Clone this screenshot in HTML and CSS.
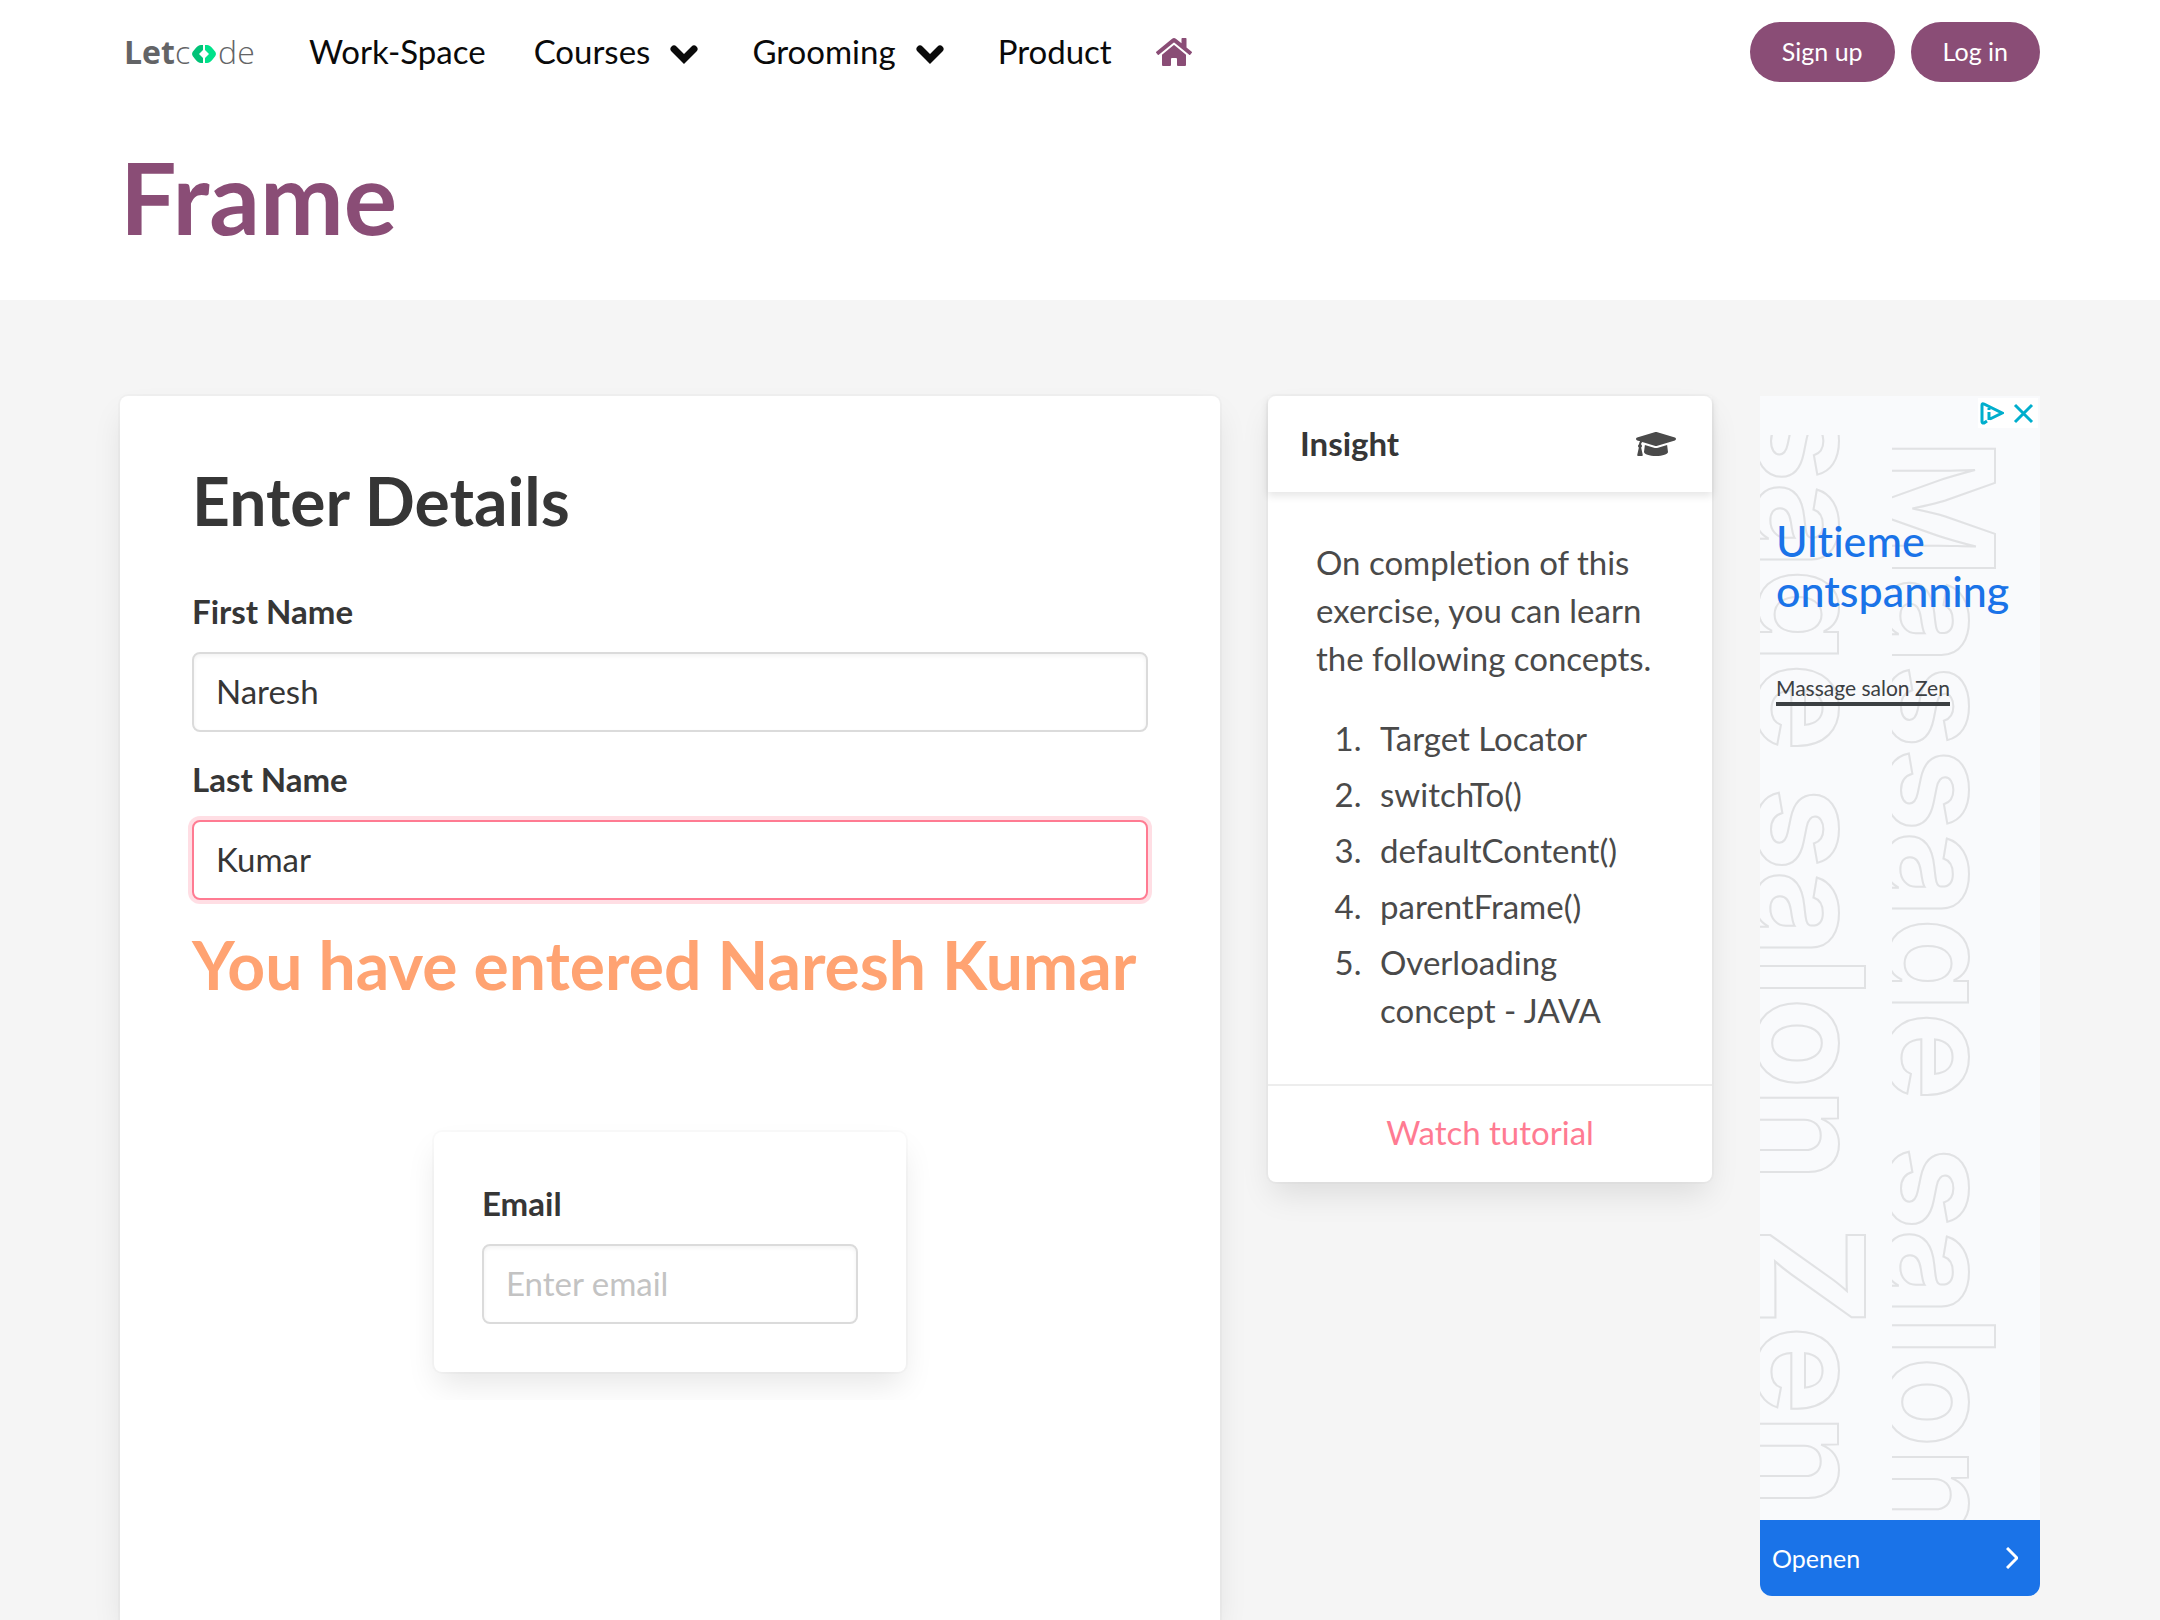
FILE: index.html
```html
<!DOCTYPE html>
<html lang="en">
<head>
<meta charset="utf-8">
<title>Frame - LetCode</title>
<meta name="viewport" content="width=device-width, initial-scale=1">
<link rel="stylesheet" href="styles.css">
</head>
<body>
<header class="top">
  <nav class="navbar" aria-label="Main">
    <a class="logo" href="#" aria-label="Letcode"><b>Let</b>c<svg class="logo-mark" viewBox="0 0 24 18" aria-hidden="true"><path fill="#00c277" d="M9 0h2v5L7 9l4 4v5H9Q6 18 3 14Q0 11 0 9Q0 7 3 4Q6 0 9 0z"/><path fill="#00e28a" d="M13 0h2Q18 0 21 4Q24 7 24 9Q24 11 21 14Q18 18 15 18h-2v-5l4-4l-4-4z"/></svg>de</a>
    <a class="nav-link" href="#">Work-Space</a>
    <button class="nav-link nav-drop" type="button">Courses
      <svg class="chevron" viewBox="0 0 28 20" aria-hidden="true"><path d="M4 4l10 10L24 4"/></svg></button>
    <button class="nav-link nav-drop" type="button">Grooming
      <svg class="chevron" viewBox="0 0 28 20" aria-hidden="true"><path d="M4 4l10 10L24 4"/></svg></button>
    <a class="nav-link nav-last" href="#">Product</a>
    <a class="home" href="#" aria-label="Home"><svg viewBox="0 0 576 512" aria-hidden="true"><path d="M280.37 148.26L96 300.11V464a16 16 0 0 0 16 16l112.06-.29a16 16 0 0 0 15.92-16V368a16 16 0 0 1 16-16h64a16 16 0 0 1 16 16v95.64a16 16 0 0 0 16 16.05L464 480a16 16 0 0 0 16-16V300L295.67 148.26a12.19 12.19 0 0 0-15.3 0zM571.6 251.47L488 182.56V44.05a12 12 0 0 0-12-12h-56a12 12 0 0 0-12 12v72.61L318.47 43a48 48 0 0 0-61 0L4.34 251.47a12 12 0 0 0-1.6 16.9l25.5 31A12 12 0 0 0 45.15 301l235.22-193.74a12.19 12.19 0 0 1 15.3 0L530.9 301a12 12 0 0 0 16.9-1.6l25.5-31a12 12 0 0 0-1.7-16.93z"/></svg></a>
    <div class="account">
      <a class="pill" href="#">Sign up</a>
      <a class="pill" href="#">Log in</a>
    </div>
  </nav>
  <h1 class="page-title">Frame</h1>
</header>

<main class="content">
  <section class="card details">
    <h2 class="details-title">Enter Details</h2>
    <form class="form">
      <div class="field">
        <label for="fname">First Name</label>
        <input id="fname" type="text" value="Naresh">
      </div>
      <div class="field">
        <label for="lname">Last Name</label>
        <input class="is-focused" id="lname" type="text" value="Kumar">
      </div>
    </form>
    <p class="message">You have entered Naresh Kumar</p>
    <div class="inner-frame">
      <form class="card email">
        <div class="field">
          <label for="email">Email</label>
          <input id="email" type="email" placeholder="Enter email">
        </div>
      </form>
    </div>
  </section>

  <aside class="card insight">
    <header class="insight-head">
      <h2>Insight</h2>
      <svg class="cap" viewBox="0 0 640 512" aria-hidden="true"><path d="M622.34 153.2L343.4 67.5c-15.2-4.67-31.6-4.67-46.79 0L17.66 153.2c-23.54 7.23-23.54 38.36 0 45.59l48.63 14.94c-10.67 13.19-17.23 29.28-17.88 46.9C38.78 266.15 32 276.11 32 288c0 10.78 5.68 19.85 13.86 25.65L20.33 428.53C18.11 438.52 25.71 448 35.94 448h56.11c10.24 0 17.84-9.48 15.62-19.47L82.14 313.65C90.32 307.85 96 298.78 96 288c0-11.57-6.47-21.25-15.66-26.87.76-15.02 8.44-28.3 20.69-36.72L296.6 284.5c9.06 2.78 26.44 6.25 46.79 0l278.95-85.7c23.55-7.24 23.55-38.36 0-45.6zM352.79 315.09c-28.53 8.76-52.84 3.92-65.59 0l-145.02-44.55L128 384c0 35.35 85.96 64 192 64s192-28.65 192-64l-14.18-113.47-145.03 44.56z"/></svg>
    </header>
    <div class="insight-body">
      <p>On completion of this exercise, you can learn the following concepts.</p>
      <ol>
        <li>Target Locator</li>
        <li>switchTo()</li>
        <li>defaultContent()</li>
        <li>parentFrame()</li>
        <li>Overloading concept - JAVA</li>
      </ol>
    </div>
    <footer class="insight-foot"><a href="#">Watch tutorial</a></footer>
  </aside>

  <aside class="ad" aria-label="Advertisement">
    <svg class="ad-pattern" viewBox="0 0 280 1124" aria-hidden="true">
      <svg x="0" y="39" width="132" height="1085" viewBox="0 39 132 1085">
        <text transform="translate(-3 -306) rotate(90)">Massage salon <tspan dx="10">Zen</tspan></text>
      </svg>
      <svg x="132" y="39" width="148" height="1085" viewBox="132 39 148 1085">
        <text transform="translate(127 43) rotate(90)">Massage <tspan dx="10">salon</tspan></text>
      </svg>
    </svg>
    <div class="ad-controls">
      <a href="#" aria-label="AdChoices"><svg viewBox="0 0 24 24" aria-hidden="true"><path d="M7 20l-3 2q-2 .5-2-1.500V4q0-2 2-1l18 9l-12 6M9 11v8" /><path d="M9 7v2"/></svg></a>
      <button type="button" aria-label="Close ad"><svg viewBox="0 0 24 24" aria-hidden="true"><path d="M3 4l17 17M20 4L3 21"/></svg></button>
    </div>
    <div class="ad-copy">
      <h2>Ultieme ontspanning</h2>
      <a class="ad-brand" href="#">Massage salon Zen</a>
    </div>
    <a class="ad-open" href="#">Openen
      <svg viewBox="0 0 12 22" aria-hidden="true"><path d="M1 1l10 10L1 21"/></svg></a>
  </aside>
</main>
</body>
</html>
```

FILE: styles.css
```css
* { box-sizing: border-box; }

body {
  margin: 0;
  min-height: 100vh;
  display: flex;
  flex-direction: column;
  background: #f5f5f5;
  color: #4a4a4a;
  font: 33px/48px Lato, "Noto Sans", sans-serif;
  font-variant-ligatures: none;
}

h1, h2, p, ol { margin: 0; }
a { color: inherit; text-decoration: none; }
button { border: 0; padding: 0; background: none; color: inherit; font: inherit; cursor: pointer; }
svg { display: block; }

/* Header */
.top { padding: 0 120px 56px; background: #fff; }
.navbar { display: flex; align-items: center; height: 104px; color: #0a0a0a; }
.logo {
  display: flex;
  align-items: center;
  width: 189px;
  padding-left: 4px;
  color: #636466;
  font: 300 32px/48px "Open Sans", sans-serif;
}
.logo b { font-weight: 700; }
.logo-mark { width: 24px; height: 18px; margin: 4px 2px 0; }
.nav-link { margin-right: 48px; padding-bottom: 2px; }
.nav-drop { display: flex; align-items: center; gap: 20px; margin-right: 54px; }
.nav-last { margin-right: 44px; }
.chevron { width: 28px; height: 20px; margin-top: 8px; fill: none; stroke: #0a0a0a; stroke-width: 7; stroke-linecap: round; }
.home svg { width: 36px; height: 32px; fill: #8a4d76; }
.account { display: flex; gap: 16px; margin-left: auto; }
.pill {
  padding: 5px 32px 7px;
  border-radius: 30px;
  background: #8a4d76;
  color: #fff;
  font-size: 25px;
}
.page-title { margin-top: 44px; color: #8a4d76; font-size: 100px; line-height: 96px; }

/* Columns */
.content {
  flex: 1;
  display: grid;
  grid-template-columns: 1100fr 444fr 280fr;
  gap: 48px;
  padding: 96px 120px 0;
}
.card {
  border-radius: 8px;
  background: #fff;
  box-shadow: 0 16px 32px -4px rgba(10, 10, 10, .1), 0 0 0 2px rgba(10, 10, 10, .02);
}

/* Form */
.details { padding: 72px 72px 0; border-radius: 8px 8px 0 0; }
.details-title { margin-bottom: 54px; color: #363636; font-size: 66px; line-height: 66px; }
.form { display: grid; gap: 24px; }
.field { display: grid; gap: 18px; }
.field label { color: #363636; font-weight: 700; line-height: 46px; }
.field input {
  width: 100%;
  height: 80px;
  padding: 0 22px 2px;
  border: 2px solid #dbdbdb;
  border-radius: 8px;
  outline: 0;
  background: #fff;
  box-shadow: inset 0 2px 4px rgba(10, 10, 10, .05);
  color: #363636;
  font: inherit;
}
.field input::placeholder { color: #c3c3c3; }
.field .is-focused { border-color: #ff7b92; box-shadow: 0 0 0 4px rgba(255, 123, 146, .25); }
.message { margin-top: 32px; color: #ffa372; font-size: 66px; font-weight: 700; line-height: 66px; }
.inner-frame { display: flex; justify-content: center; overflow: hidden; margin-top: 102px; padding: 32px 0 28px; }
.email { width: 472px; padding: 48px; }

/* Insight */
.insight { align-self: start; }
.insight-head {
  display: flex;
  align-items: center;
  justify-content: space-between;
  height: 96px;
  padding: 0 36px 0 32px;
  box-shadow: 0 4px 8px rgba(10, 10, 10, .1);
}
.insight-head h2 { padding-bottom: 2px; color: #363636; font-size: 33px; }
.cap { width: 40px; height: 32px; fill: #4a4a4a; }
.insight-body { padding: 46px 48px 50px; }
.insight-body ol { display: grid; gap: 8px; margin: 32px 0 0 54px; padding: 0; }
.insight-body li { padding-left: 10px; }
.insight-foot { padding: 22px 24px 26px; border-top: 2px solid #ededed; color: #ff7b92; text-align: center; }

/* Advertisement */
.ad {
  position: relative;
  display: flex;
  flex-direction: column;
  align-self: start;
  height: 1200px;
  border-radius: 0 0 12px 12px;
  overflow: hidden;
  background: #f9fafc;
}
.ad-pattern { position: absolute; top: 0; left: 0; width: 100%; height: 1124px; }
.ad-pattern text {
  fill: none;
  stroke: #e1e2e4;
  stroke-width: 2;
  font: 700 149px Inter, sans-serif;
}
.ad-controls {
  position: absolute;
  top: 2px;
  right: 2px;
  display: flex;
  gap: 8px;
  padding: 3px 2px;
  background: #fff;
}
.ad-controls svg { width: 24px; height: 24px; fill: none; stroke: #00aecd; stroke-width: 3; }
.ad-controls a, .ad-controls button { line-height: 24px; }
.ad-copy { position: relative; padding: 120px 16px 0; }
.ad-copy h2 { color: #1a73e8; font-size: 43px; font-weight: 500; line-height: 50px; }
.ad-brand {
  display: inline-block;
  margin-top: 58px;
  border-bottom: 4px solid #3c4043;
  color: #3c4043;
  font-size: 21px;
  line-height: 28px;
}
.ad-open {
  position: relative;
  display: flex;
  align-items: center;
  justify-content: space-between;
  height: 76px;
  margin-top: auto;
  padding: 0 22px 0 12px;
  background: #1a73e8;
  color: #fff;
  font-size: 25px;
}
.ad-open svg { width: 12px; height: 22px; fill: none; stroke: #fff; stroke-width: 3; }
```
